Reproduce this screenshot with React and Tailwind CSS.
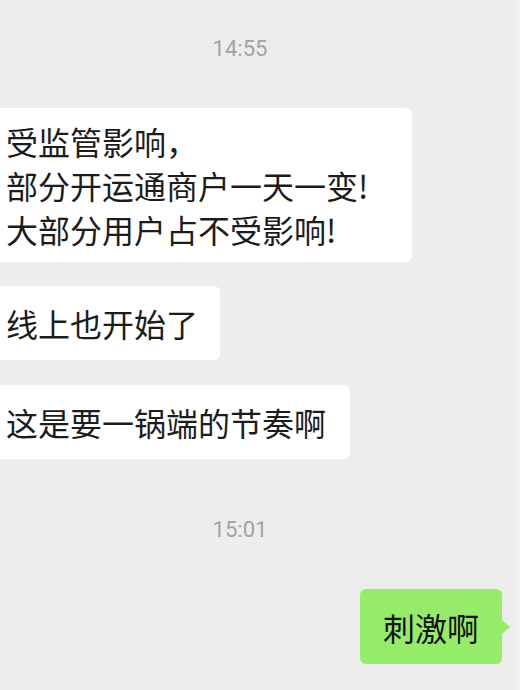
export default function App() {
  const cjk = { fontFamily: '"Noto Sans CJK SC", "Noto Sans", sans-serif' };
  return (
    <div className="w-[522px] h-[690px] bg-[#ededed] overflow-hidden flex flex-row">
      <div className="flex-1 flex flex-col" style={cjk}>
        <div className="pt-[35px] pr-[35px] text-center text-[22px] leading-[28px] text-[#a3a3a3] font-['Roboto',sans-serif]">14:55</div>

        <div className="mt-[45px] w-[412px] bg-white rounded-r-[6px] pl-[6px] py-[11px] text-[32px] leading-[44px] text-[#1c1c1c]">
          受监管影响，<br />部分开运通商户一天一变!<br />大部分用户占不受影响!
        </div>

        <div className="mt-[24px] w-[220px] bg-white rounded-r-[6px] pl-[6px] py-[15px] text-[32px] leading-[44px] text-[#1c1c1c]">
          线上也开始了
        </div>

        <div className="mt-[25px] w-[350px] bg-white rounded-r-[6px] pl-[6px] py-[15px] text-[32px] leading-[44px] text-[#1c1c1c]">
          这是要一锅端的节奏啊
        </div>

        <div className="mt-[57px] pr-[35px] text-center text-[22px] leading-[28px] text-[#a3a3a3] font-['Roboto',sans-serif]">15:01</div>

        <div className="mt-[45px] flex flex-row justify-end items-center pr-[5px]">
          <div className="w-[142px] h-[75px] bg-[#95ec69] rounded-[6px] flex items-center justify-center text-[32px] leading-[44px] text-[#111]">
            刺激啊
          </div>
          <div className="w-0 h-0 border-y-[7px] border-y-transparent border-l-[8px] border-l-[#95ec69]" />
        </div>
      </div>
      <div className="w-[5px] bg-[#f1f1f1]" />
      <div className="w-[2px] bg-white" />
    </div>
  );
}
